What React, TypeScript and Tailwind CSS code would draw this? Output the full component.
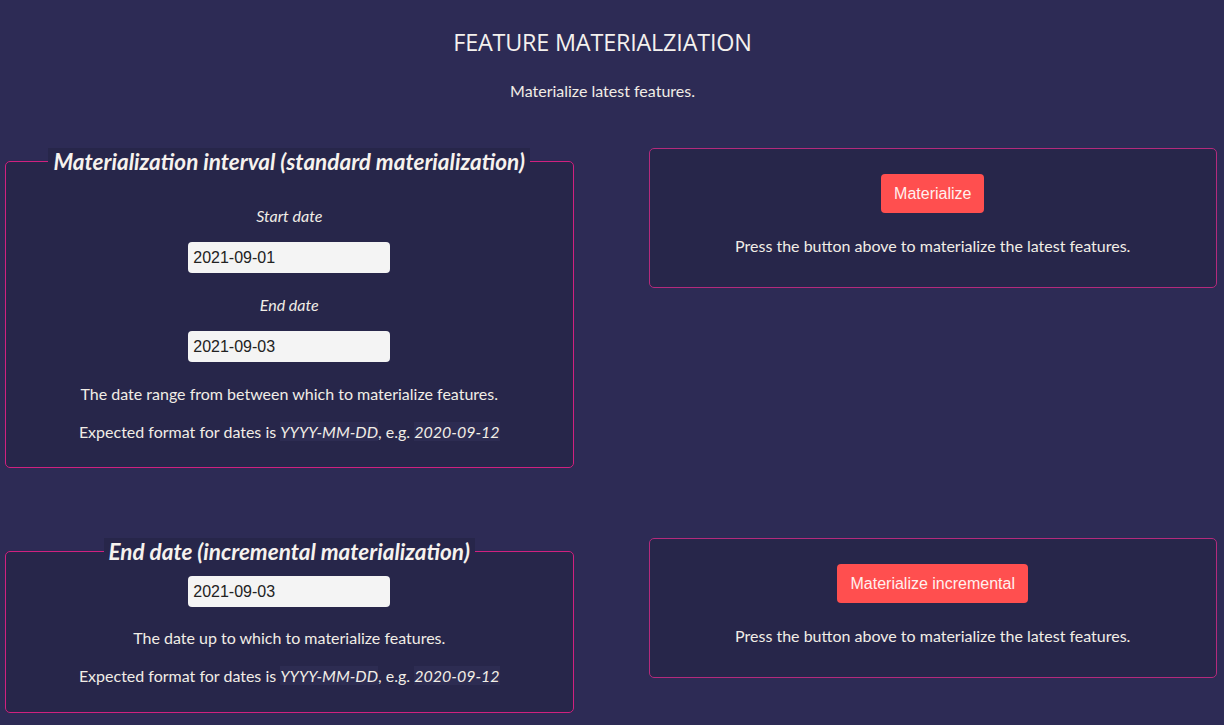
import React from 'react'

const body = "font-['Lato','Noto_Sans',sans-serif]"

function DateInput({ value }: { value: string }) {
    return (
        <input
            type="text"
            defaultValue={value}
            className="w-[202px] h-[31px] rounded-[4px] bg-[#f4f4f4] px-[5px] text-[16px] text-[#222] font-['Liberation_Sans',Arial,sans-serif] outline-none"
        />
    )
}

function FormatHint() {
    return (
        <p className="text-[16px] leading-[22px] text-[#f1ede6]">
            Expected format for dates is <em className="bg-[#2d2c52]">YYYY-MM-DD</em>, e.g.{' '}
            <em className="bg-[#2d2c52]">2020-09-12</em>
        </p>
    )
}

function FieldCard({ title, children }: { title: string; children: React.ReactNode }) {
    return (
        <fieldset className="rounded-[5px] border border-solid border-[#d0217f] bg-[#27264a] px-4">
            <legend className="mx-auto bg-[#27264a] px-[5px] text-[22.5px] leading-[27px] font-bold italic text-[#f6f2ee]">
                {title}
            </legend>
            <div className="flex flex-col items-center text-center">{children}</div>
        </fieldset>
    )
}

function ActionCard({ label }: { label: string }) {
    return (
        <div className="flex h-[140px] flex-col items-center rounded-[5px] border border-[#b42a7c] bg-[#27264a] pt-[25px]">
            <button className="h-[39px] rounded-[4px] bg-[#ff4f4f] px-[13px] text-[16px] text-[#fff0ee] font-['Liberation_Sans',Arial,sans-serif]">
                {label}
            </button>
            <p className="mt-[22px] text-[16px] leading-[22px] text-[#f1ede6]">
                Press the button above to materialize the latest features.
            </p>
        </div>
    )
}

export default function App() {
    return (
        <div className={`min-h-screen bg-[#2d2b55] ${body} pb-10`}>
            <header className="flex flex-col items-center pt-[28px] pr-[19px]">
                <h1 className="text-[23.4px] leading-[28px] text-[#f4f1ee] font-['Open_Sans',sans-serif] tracking-[-0.2px]">
                    FEATURE MATERIALZIATION
                </h1>
                <p className="mt-[24px] text-[16px] leading-[22px] text-[#f1ede6]">Materialize latest features.</p>
            </header>

            <div className="mt-[46px] grid grid-cols-2 gap-x-[75px] gap-y-[70px] pl-[5px] pr-[7px]">
                <FieldCard title="Materialization interval (standard materialization)">
                    <p className="mt-[30px] text-[16px] leading-[22px] italic text-[#f1ede6]">Start date</p>
                    <div className="mt-[15px]">
                        <DateInput value="2021-09-01" />
                    </div>
                    <p className="mt-[21px] text-[16px] leading-[22px] italic text-[#f1ede6]">End date</p>
                    <div className="mt-[15px]">
                        <DateInput value="2021-09-03" />
                    </div>
                    <p className="mt-[21px] text-[16px] leading-[22px] text-[#f1ede6]">
                        The date range from between which to materialize features.
                    </p>
                    <div className="mt-[16px] mb-[24px]">
                        <FormatHint />
                    </div>
                </FieldCard>

                <div>
                    <ActionCard label="Materialize" />
                </div>

                <FieldCard title="End date (incremental materialization)">
                    <div className="mt-[11px]">
                        <DateInput value="2021-09-03" />
                    </div>
                    <p className="mt-[20px] text-[16px] leading-[22px] text-[#f1ede6]">
                        The date up to which to materialize features.
                    </p>
                    <div className="mt-[16px] mb-[25px]">
                        <FormatHint />
                    </div>
                </FieldCard>

                <div>
                    <ActionCard label="Materialize incremental" />
                </div>
            </div>
        </div>
    )
}
